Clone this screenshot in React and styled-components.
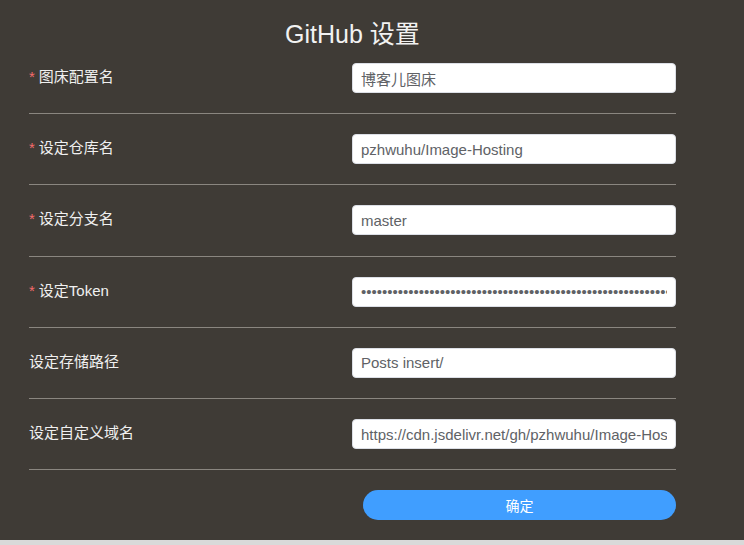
import React, { useState } from "react";
import styled, { createGlobalStyle } from "styled-components";

const GlobalStyle = createGlobalStyle`
  html, body {
    margin: 0;
    padding: 0;
    background: #d9d9d9;
    font-family: "Liberation Sans", Arial, "Noto Sans CJK SC", sans-serif;
  }
  * { box-sizing: border-box; }
`;

const Page = styled.div`
  height: 540px;
  background: #3f3b36;
  padding-left: 29px;
  overflow: hidden;
`;

const Panel = styled.div`
  width: 647px;
`;

const Title = styled.h2`
  margin: 22px 0 -3px;
  font-size: 25px;
  line-height: 24px;
  font-weight: normal;
  text-align: center;
  color: #f2f2f2;
`;

const Row = styled.div`
  display: flex;
  align-items: center;
  justify-content: space-between;
  padding: 20.1px 0;
  border-bottom: 1px solid #8a8680;
`;

const Label = styled.label`
  font-size: 15px;
  color: #f0f0f0;
  line-height: 20px;
  margin-top: -2px;
`;

const Star = styled.span`
  color: #f56c6c;
  margin-right: 4px;
`;

const Input = styled.input`
  width: 324px;
  height: 30px;
  padding: 0 8px;
  border: 1px solid #dcdfe6;
  border-radius: 4px;
  background: #fff;
  color: #606266;
  font-size: 15px;
  font-family: "Liberation Sans", Arial, "Noto Sans CJK SC", sans-serif;
  outline: none;
`;

const Footer = styled.div`
  display: flex;
  justify-content: flex-end;
  padding-top: 20px;
`;

const Button = styled.button`
  width: 313px;
  height: 30px;
  border: none;
  border-radius: 15px;
  background: #409eff;
  color: #fff;
  font-size: 14px;
  font-family: "Liberation Sans", Arial, "Noto Sans CJK SC", sans-serif;
  cursor: pointer;
`;

const fields = [
  { label: "图床配置名", value: "博客儿图床", required: true },
  { label: "设定仓库名", value: "pzhwuhu/Image-Hosting", required: true },
  { label: "设定分支名", value: "master", required: true },
  { label: "设定Token", value: "ghp_xxxxxxxxxxxxxxxxxxxxxxxxxxxxxxxxxxxxxxxxxxxxxxxxxxxxxxxxxxxxxxxx", required: true, type: "password" },
  { label: "设定存储路径", value: "Posts insert/" },
  { label: "设定自定义域名", value: "https://cdn.jsdelivr.net/gh/pzhwuhu/Image-Hosting@master" },
];

export default function App() {
  const [values, setValues] = useState(fields.map((f) => f.value));

  const update = (i) => (e) => {
    const next = [...values];
    next[i] = e.target.value;
    setValues(next);
  };

  return (
    <>
      <GlobalStyle />
      <Page>
        <Panel>
          <Title>GitHub 设置</Title>
          {fields.map((f, i) => (
            <Row key={f.label}>
              <Label>
                {f.required && <Star>*</Star>}
                {f.label}
              </Label>
              <Input type={f.type || "text"} value={values[i]} onChange={update(i)} />
            </Row>
          ))}
          <Footer>
            <Button>确定</Button>
          </Footer>
        </Panel>
      </Page>
    </>
  );
}
